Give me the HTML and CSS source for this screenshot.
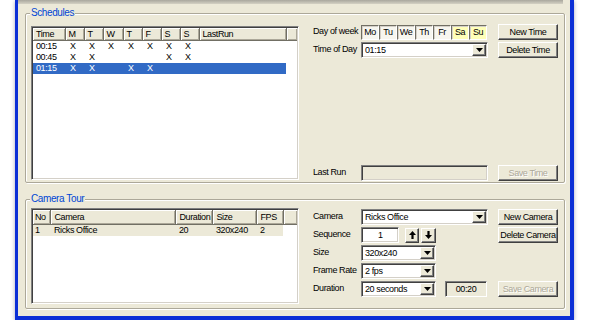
FILE: index.html
```html
<!DOCTYPE html>
<html lang="en">
<head>
    <meta charset="UTF-8">
    <title>Schedules and Camera Tour</title>
    <link rel="stylesheet" href="styles.css">
</head>
<body>
    <div class="window">
        <div class="topbar"></div>

        <div class="group schedules">
            <span class="group-title">Schedules</span>
            <div class="listview sched-list">
                <table>
                    <colgroup>
                        <col style="width:32px"><col style="width:19px"><col style="width:19px"><col style="width:20px">
                        <col style="width:19px"><col style="width:19px"><col style="width:19px"><col style="width:19px">
                        <col style="width:87px"><col>
                    </colgroup>
                    <thead>
                        <tr><th>Time</th><th>M</th><th>T</th><th>W</th><th>T</th><th>F</th><th>S</th><th>S</th><th>LastRun</th><th class="filler"></th></tr>
                    </thead>
                    <tbody>
                        <tr><td>00:15</td><td>X</td><td>X</td><td>X</td><td>X</td><td>X</td><td>X</td><td>X</td><td></td><td class="filler"></td></tr>
                        <tr><td>00:45</td><td>X</td><td>X</td><td></td><td></td><td></td><td>X</td><td>X</td><td></td><td class="filler"></td></tr>
                        <tr class="selected"><td>01:15</td><td>X</td><td>X</td><td></td><td>X</td><td>X</td><td></td><td></td><td></td><td class="filler"></td></tr>
                    </tbody>
                </table>
            </div>

            <div class="panel sched-panel">
                <div class="row">
                    <span class="label">Day of week</span>
                    <div class="days">
                        <span class="day">Mo</span><span class="day">Tu</span><span class="day">We</span><span class="day">Th</span><span class="day">Fr</span><span class="day weekend">Sa</span><span class="day weekend">Su</span>
                    </div>
                    <button class="btn">New Time</button>
                </div>
                <div class="row">
                    <span class="label">Time of Day</span>
                    <div class="combo wide">
                        <span class="combo-text">01:15</span>
                        <span class="combo-btn"><svg width="7" height="4" viewBox="0 0 7 4"><path d="M0 0h7L3.5 4z"/></svg></span>
                    </div>
                    <button class="btn">Delete Time</button>
                </div>
                <div class="row last-run">
                    <span class="label">Last Run</span>
                    <div class="field wide"></div>
                    <button class="btn disabled">Save Time</button>
                </div>
            </div>
        </div>

        <div class="group camera-tour">
            <span class="group-title">Camera Tour</span>
            <div class="listview cam-list">
                <table>
                    <colgroup>
                        <col style="width:17px"><col style="width:125px"><col style="width:37px"><col style="width:44px"><col style="width:27px"><col>
                    </colgroup>
                    <thead>
                        <tr><th>No</th><th>Camera</th><th>Duration</th><th>Size</th><th>FPS</th><th class="filler"></th></tr>
                    </thead>
                    <tbody>
                        <tr class="inactive"><td>1</td><td>Ricks Office</td><td>20</td><td>320x240</td><td>2</td><td class="filler"></td></tr>
                    </tbody>
                </table>
            </div>

            <div class="panel cam-panel">
                <div class="row">
                    <span class="label">Camera</span>
                    <div class="combo wide">
                        <span class="combo-text">Ricks Office</span>
                        <span class="combo-btn"><svg width="7" height="4" viewBox="0 0 7 4"><path d="M0 0h7L3.5 4z"/></svg></span>
                    </div>
                    <button class="btn">New Camera</button>
                </div>
                <div class="row">
                    <span class="label">Sequence</span>
                    <div class="seq">
                        <div class="field seq-input">1</div>
                        <span class="arrow-btn"><svg width="7" height="8" viewBox="0 0 7 8"><path d="M3.5 0L7 4H4.6V8H2.4V4H0z"/></svg></span>
                        <span class="arrow-btn"><svg width="7" height="8" viewBox="0 0 7 8"><path d="M3.5 8L7 4H4.6V0H2.4V4H0z"/></svg></span>
                    </div>
                    <button class="btn">Delete Camera</button>
                </div>
                <div class="row">
                    <span class="label">Size</span>
                    <div class="combo short">
                        <span class="combo-text">320x240</span>
                        <span class="combo-btn"><svg width="7" height="4" viewBox="0 0 7 4"><path d="M0 0h7L3.5 4z"/></svg></span>
                    </div>
                </div>
                <div class="row">
                    <span class="label">Frame Rate</span>
                    <div class="combo short">
                        <span class="combo-text">2 fps</span>
                        <span class="combo-btn"><svg width="7" height="4" viewBox="0 0 7 4"><path d="M0 0h7L3.5 4z"/></svg></span>
                    </div>
                </div>
                <div class="row">
                    <span class="label">Duration</span>
                    <div class="duration">
                        <div class="combo short">
                            <span class="combo-text">20 seconds</span>
                            <span class="combo-btn"><svg width="7" height="4" viewBox="0 0 7 4"><path d="M0 0h7L3.5 4z"/></svg></span>
                        </div>
                        <div class="readout">00:20</div>
                    </div>
                    <button class="btn disabled">Save Camera</button>
                </div>
            </div>
        </div>
    </div>
</body>
</html>
```

FILE: styles.css
```css
* {
    box-sizing: border-box;
}
body {
    margin: 0;
    background: #fff;
    font-family: "Liberation Sans", Arial, sans-serif;
    font-size: 9px;
    letter-spacing: -0.4px;
    color: #000;
}
.window {
    margin-left: 15px;
    width: 559px;
    height: 320px;
    border-style: none solid solid solid;
    border-width: 0 4px 4px 3px;
    border-color: #0b2fd6;
    background: #ece9d8;
    box-shadow: 0 1px 4px rgba(0, 0, 60, 0.35);
    display: flex;
    flex-direction: column;
}
.topbar {
    height: 4px;
    margin-right: 7px;
    background: linear-gradient(#a9a79e, #d4d1c4);
}
.group {
    position: relative;
    display: flex;
    border: 1px solid #aca899;
    border-radius: 2px;
    box-shadow: inset 1px 1px #fff, 1px 1px #fff;
}
.group-title {
    position: absolute;
    top: -7px;
    left: 4px;
    padding: 0 1px;
    line-height: 12px;
    font-size: 10px;
    background: #ece9d8;
    color: #0046d5;
}
.schedules {
    height: 170px;
    margin: 9px 5px 0 7px;
    padding: 10px 0 0 5px;
}
.camera-tour {
    flex: 1;
    margin: 16px 5px 7px 7px;
    padding: 8px 0 0 5px;
}

/* list views */
.listview {
    width: 268px;
    background: #fff;
    border: 1px solid;
    border-color: #808080 #fff #fff #808080;
    box-shadow: inset 1px 1px #404040, inset -1px -1px #d4d0c8;
    padding: 1px;
    overflow: hidden;
}
.sched-list {
    height: 154px;
    margin-top: 2px;
}
.cam-list {
    height: 96px;
}
.listview table {
    width: 100%;
    table-layout: fixed;
    border-collapse: collapse;
}
.listview th {
    height: 12px;
    padding: 0 0 0 3px;
    font-weight: normal;
    text-align: left;
    background: #ece9d8;
    border-right: 1px solid #716f64;
    border-bottom: 1px solid #716f64;
    box-shadow: inset 1px 1px #fff, inset -1px -1px #aca899;
    white-space: nowrap;
    overflow: hidden;
}
.cam-list th {
    height: 14px;
    padding-left: 4px;
}
.cam-list th:first-child {
    padding-left: 2px;
}
.listview th.filler {
    border-right: none;
}
.listview td {
    height: 11px;
    padding: 0 0 0 3px;
    line-height: 11px;
    white-space: nowrap;
    overflow: hidden;
}
.sched-list td + td {
    padding-left: 5px;
}
.cam-list td {
    padding-left: 4px;
}
.cam-list td:first-child {
    padding-left: 2px;
}
.listview tr.selected td {
    background: #316ac5;
    color: #fff;
}
.listview tr.inactive td {
    background: #ece9d8;
}
.listview tr td.filler {
    background: none;
}

/* right hand panels */
.panel {
    margin-left: 14px;
    display: flex;
    flex-direction: column;
    gap: 2px;
}
.sched-panel {
    padding-bottom: 1px;
}
.cam-panel {
    margin-top: 1px;
}
.row {
    display: grid;
    grid-template-columns: 48px 137px 60px;
    align-items: center;
    height: 16px;
}
.row.last-run {
    margin-top: auto;
}
.label {
    white-space: nowrap;
    margin-top: -2px;
}
.btn {
    width: 60px;
    height: 16px;
    padding: 0;
    font: inherit;
    letter-spacing: inherit;
    color: #000;
    background: #ece9d8;
    border: 1px solid;
    border-color: #fff #404040 #404040 #fff;
    box-shadow: inset -1px -1px #808080;
    white-space: nowrap;
}
.btn.disabled {
    color: #aca899;
    text-shadow: 1px 1px #fff;
}
.days {
    display: flex;
    width: 127px;
    height: 15px;
}
.day {
    width: 18px;
    display: flex;
    align-items: center;
    justify-content: center;
    background: #f7f6ef;
    border: 1px solid;
    border-color: #716f64 #fff #fff #716f64;
    box-shadow: inset 1px 1px #d4d0c8;
}
.day.weekend {
    background: #ffffb8;
}
.field,
.combo {
    height: 16px;
    background: #fff;
    border: 1px solid;
    border-color: #808080 #fff #fff #808080;
    box-shadow: inset 1px 1px #404040, inset -1px -1px #d4d0c8;
}
.combo {
    display: flex;
    align-items: center;
    justify-content: space-between;
    padding: 1px;
}
.combo-text {
    padding-left: 2px;
}
.combo-btn,
.arrow-btn {
    display: flex;
    align-items: center;
    justify-content: center;
    background: #ece9d8;
    border: 1px solid;
    border-color: #fff #404040 #404040 #fff;
    box-shadow: inset -1px -1px #808080;
}
.combo-btn {
    width: 14px;
    height: 12px;
}
.wide {
    width: 127px;
}
.field.wide {
    background: #ece9d8;
}
.short {
    width: 75px;
}
.seq {
    display: flex;
    align-items: center;
}
.seq-input {
    width: 38px;
    padding-left: 16px;
    line-height: 14px;
}
.arrow-btn {
    width: 14px;
    height: 15px;
    margin-left: 6px;
}
.arrow-btn + .arrow-btn {
    margin-left: 2px;
    width: 15px;
}
.duration {
    display: flex;
    align-items: center;
}
.readout {
    width: 42px;
    height: 16px;
    margin-left: 9px;
    line-height: 14px;
    text-align: center;
    border: 1px solid;
    border-color: #808080 #fff #fff #808080;
    box-shadow: inset 1px 1px #404040;
}
```
